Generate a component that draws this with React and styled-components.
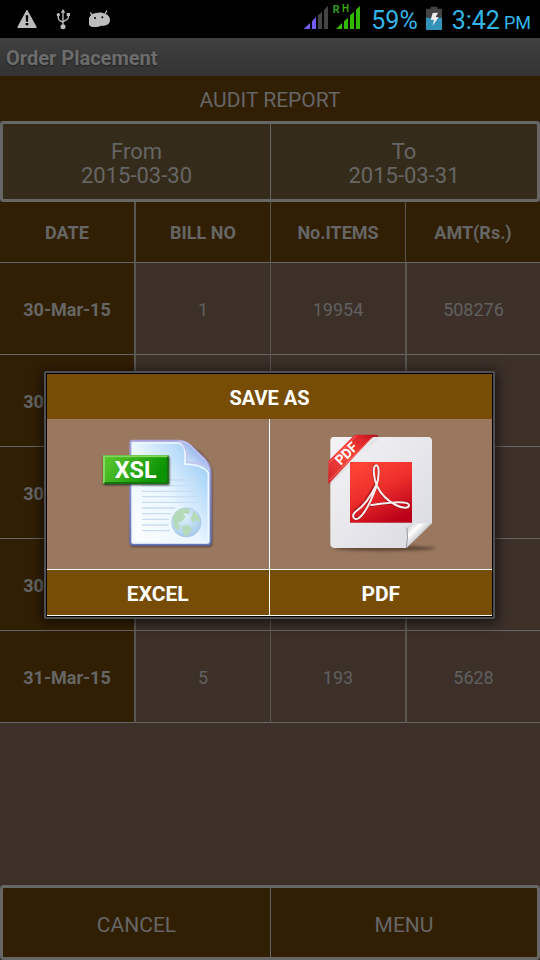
import styled, { createGlobalStyle } from "styled-components";

const GlobalStyle = createGlobalStyle`
  * {
    box-sizing: border-box;
  }

  body {
    margin: 0;
    background: #3c3029;
    color: #666666;
    font-family: Roboto, "Liberation Sans", sans-serif;
  }

  button {
    margin: 0;
    padding: 0;
    border: 0;
    background: none;
    color: inherit;
    font: inherit;
    cursor: pointer;
  }
`;

//Styled Components
const Screen = styled.div`
  min-height: 100vh;
  display: flex;
  flex-direction: column;
`;

const StatusBar = styled.header`
  height: 38px;
  padding: 0 9px 0 17px;
  display: flex;
  justify-content: space-between;
  background: #000000;
  color: #33b5e5;
  font-size: 25px;
  line-height: 42px;

  svg {
    display: block;
  }
`;

const Notifications = styled.div`
  display: flex;
  gap: 19px;
`;

const System = styled.div`
  display: flex;
  gap: 10px;
`;

const Percent = styled.span`
  margin-right: -2px;
`;

const Clock = styled.time`
  small {
    margin-left: 4px;
    font-size: 18px;
  }
`;

const AppBar = styled.h1`
  height: 38px;
  margin: 0;
  padding: 0 6px;
  background: linear-gradient(#404040, #333333);
  color: #6c6c6c;
  font-size: 20px;
  font-weight: 700;
  line-height: 40px;
  text-shadow: 0 1px 2px #222222;
`;

const PageTitle = styled.h2`
  height: 45px;
  margin: 0;
  background: #311f04;
  font-size: 21px;
  font-weight: 400;
  line-height: 49px;
  text-align: center;
`;

const Group = styled.div`
  display: grid;
  grid-template-columns: 1fr 1fr;
  border: 3px solid #666666;
  border-radius: 4px;
  background: ${({ $fill }) => $fill};
`;

const GroupButton = styled.button`
  height: ${({ $height }) => $height};
  padding-top: 4px;
  font-size: ${({ $size }) => $size};
  line-height: 24px;

  & + & {
    border-left: 1px solid #666666;
  }

  span {
    display: block;
  }
`;

const Report = styled.table`
  width: 100%;
  table-layout: fixed;
  border-collapse: separate;
  border-spacing: 0;
  font-size: 18px;
  line-height: 24px;
  text-align: center;
`;

const HeadCell = styled.th`
  height: 61px;
  padding: 2px 0 0;
  background: #311f04;
  border-bottom: 1px solid #666666;
  border-left: 1px solid #5a5753;

  &:first-child {
    border-left: 0;
    border-right: 1px solid #5a5753;
  }
`;

const DateCell = styled.th`
  height: 92px;
  padding: 2px 0 0;
  background: #311f04;
  border-bottom: 1px solid #666666;
  border-right: 1px solid #5a5753;
`;

const Cell = styled.td`
  height: 92px;
  padding: 2px 0 0;
  border-bottom: 1px solid #666666;
  border-left: 1px solid #5a5753;
  color: #606060;

  &:last-child {
    border-left-width: 2px;
  }
`;

const Footer = styled.footer`
  margin-top: auto;
`;

const Overlay = styled.div`
  position: fixed;
  inset: 0;
  padding: 30px 45px 0 44px;
  display: flex;
  align-items: center;
`;

const Dialog = styled.section`
  flex: 1;
  border: 2px solid #505050;
  border-radius: 2px;
  background: #000000;
  padding: 1px;
  box-shadow: 0 2px 12px 2px rgba(0, 0, 0, 0.6);
  color: #ffffff;
  font-size: 21px;
  font-weight: 700;
  line-height: 49px;
  text-align: center;
`;

const DialogTitle = styled.h2`
  height: 45px;
  margin: 0;
  background: #774d06;
  font-size: 20px;
`;

const Options = styled.div`
  display: grid;
  grid-template-columns: 1fr 1fr;
`;

const Option = styled.button`
  background: #99785f;

  &:first-child {
    border-right: 1px solid #ffffff;
  }
`;

const Picture = styled.span`
  height: 150px;
  display: flex;
  align-items: center;
  justify-content: center;
`;

const Label = styled.span`
  height: 47px;
  display: block;
  border-top: 1px solid #ffffff;
  border-bottom: 1px solid #ffffff;
  background: #774d06;
`;

const columns = ["DATE", "BILL NO", "No.ITEMS", "AMT(Rs.)"];

const rows = [
  ["30-Mar-15", "1", "19954", "508276"],
  ["30-Mar-15", "", "", ""],
  ["30-Mar-15", "", "", ""],
  ["30-Mar-15", "", "", ""],
  ["31-Mar-15", "5", "193", "5628"],
];

function WarningIcon() {
  return (
    <svg width="20" height="38" viewBox="51 0 60 114" aria-hidden="true">
      <path
        d="M81 32 L108 82 H54 Z"
        fill="#bdbdbd"
        stroke="#bdbdbd"
        strokeWidth="4"
        strokeLinejoin="round"
      />
      <path d="M77 46 H85 L84 65 H78 Z M77 69 H85 V76 H77 Z" fill="#000" />
    </svg>
  );
}

function UsbIcon() {
  return (
    <svg width="14" height="38" viewBox="169 0 42 114" aria-hidden="true">
      <g fill="none" stroke="#bdbdbd" strokeWidth="4">
        <path d="M190 34 V78" />
        <path d="M176 45 V55 Q176 59 181 62 L190 67" />
        <path d="M206 45 V52 Q206 56 201 59 L190 65" />
      </g>
      <g fill="#bdbdbd">
        <path d="M190 27 L197 38 H183 Z" />
        <circle cx="176" cy="44" r="5" />
        <rect x="201" y="39" width="10" height="9" />
        <circle cx="190" cy="80" r="7.5" />
      </g>
    </svg>
  );
}

function AndroidIcon() {
  return (
    <svg width="22" height="38" viewBox="266 0 66 114" aria-hidden="true">
      <path
        d="M264 66 C263 51 273 41 287 39 C297 36 308 37 315 42 C324 44 329 52 329 60 C329 72 317 79 303 77 C296 79 290 82 281 81 C270 81 264 75 264 66 Z"
        fill="#bdbdbd"
      />
      <path
        d="M271 39 L277 47 M319 33 L314 42"
        stroke="#bdbdbd"
        strokeWidth="4"
        strokeLinecap="round"
      />
      <circle cx="284" cy="54" r="3" fill="#000" />
      <circle cx="306" cy="52" r="3" fill="#000" />
    </svg>
  );
}

function SignalIcon() {
  return (
    <svg width="58" height="38" viewBox="18 0 174 114" aria-hidden="true">
      <path d="M20 87 L39 69 V87 Z M45 64 L57 51 V87 H45 Z" fill="#735cf5" />
      <path d="M63 46 L75 35 V87 H63 Z M81 29 L93 18 V87 H81 Z" fill="#444444" />
      <path
        d="M117 87 L135 69 V87 Z M141 64 L153 53 V87 H141 Z M159 46 L171 35 V87 H159 Z M177 29 L189 18 V87 H177 Z"
        fill="#33b800"
      />
      <text x="107" y="39" fontSize="32" fontWeight="700" fill="#2f9e1a">
        R
      </text>
      <text x="135" y="37" fontSize="30" fontWeight="500" fill="#33b800">
        H
      </text>
    </svg>
  );
}

function BatteryIcon() {
  return (
    <svg width="16" height="38" viewBox="381 0 48 114" aria-hidden="true">
      <path d="M395 20 H415 V26 H429 V53 H381 V26 H395 Z" fill="#444444" />
      <path d="M381 53 H429 V90 H381 Z" fill="#3292b8" />
      <path d="M401 39 L417 38 L410 51 L419 52 L401 77 L405 59 L395 60 Z" fill="#eeeeee" />
    </svg>
  );
}

function ExcelPicture() {
  return (
    <svg width="140" height="140" viewBox="-6 -3 420 420" aria-hidden="true">
      <defs>
        <linearGradient id="sheet" x1="0" y1="1" x2="1" y2="0.1">
          <stop offset="0" stopColor="#ffffff" />
          <stop offset="0.5" stopColor="#e9f6ff" />
          <stop offset="1" stopColor="#8fc6f5" />
        </linearGradient>
        <linearGradient id="sheetEdge" x1="0" y1="0" x2="0" y2="1">
          <stop offset="0" stopColor="#a9a0d6" />
          <stop offset="1" stopColor="#6474b4" />
        </linearGradient>
        <linearGradient id="sheetFold" x1="0" y1="1" x2="1" y2="0">
          <stop offset="0.1" stopColor="#e8f6ff" />
          <stop offset="0.6" stopColor="#9bb9ee" />
        </linearGradient>
        <linearGradient id="tag" x1="0" y1="0" x2="1" y2="0.3">
          <stop offset="0" stopColor="#5cc62e" />
          <stop offset="1" stopColor="#0b9404" />
        </linearGradient>
        <radialGradient id="globe" cx="0.4" cy="0.3" r="0.75">
          <stop offset="0" stopColor="#e2f4fb" />
          <stop offset="1" stopColor="#a3c8ea" />
        </radialGradient>
        <filter id="soft" x="-20%" y="-20%" width="140%" height="140%">
          <feGaussianBlur stdDeviation="3" />
        </filter>
      </defs>
      <path
        d="M124 52 H275 Q350 80 366 140 V356 Q366 364 358 365 H127 Q121 364 121 358 Z"
        fill="#4a3930"
        filter="url(#soft)"
      />
      <path
        d="M127 47 H266 Q286 47 302 62 L345 103 Q361 119 362 141 V350 Q362 359 353 359 H129 Q121 359 121 351 V53 Q121 47 127 47 Z"
        fill="url(#sheet)"
        stroke="url(#sheetEdge)"
        strokeWidth="6"
      />
      <path
        d="M129 54 H262 Q281 56 284 74 Q287 92 284 117 Q337 118 355 143 V348 Q355 352 350 352 H129 Z"
        fill="none"
        stroke="#eff8ff"
        strokeWidth="5"
      />
      <path
        d="M269 49 Q294 66 291 112 Q332 110 357 132 Q351 111 341 101 L300 61 Q287 48 269 49 Z"
        fill="url(#sheetFold)"
        stroke="#c5c2ed"
        strokeWidth="4"
      />
      <path
        d="M156 165 H322 M156 182 H322 M156 199 H322 M156 215 H322 M156 232 H322 M156 249 H256 M156 266 H244 M156 283 H236 M156 300 H236 M156 317 H240"
        stroke="#cadcf1"
        strokeWidth="4"
      />
      <circle cx="289" cy="292" r="44" fill="url(#globe)" stroke="#a5bfe5" strokeWidth="2" />
      <g fill="#b4dab8">
        <path d="M250 272 Q262 250 290 249 L302 257 L294 267 L280 265 L287 276 L276 289 L263 293 L270 307 L263 317 Q246 303 250 272 Z" />
        <path d="M309 259 Q330 272 331 294 L318 286 L309 292 L301 282 L307 271 Z" />
        <path d="M275 304 L294 300 L306 310 L294 332 L282 331 Z" />
      </g>
      <path d="M41 96 H238 V180 H41 Z" fill="#222c1a" filter="url(#soft)" />
      <path d="M39 91 H236 V177 H39 Z" fill="#14750c" />
      <path d="M39 91 H236 L229 98 H46 V170 L39 177 Z" fill="#83d959" />
      <path d="M45 97 H230 V171 H45 Z" fill="url(#tag)" />
      <text
        x="137"
        y="159"
        fontFamily="'Liberation Sans Narrow', Roboto, sans-serif"
        fontSize="70"
        fontWeight="700"
        textAnchor="middle"
        fill="#ffffff"
      >
        XSL
      </text>
    </svg>
  );
}

function PdfPicture() {
  return (
    <svg width="140" height="140" viewBox="-12 -3 420 420" aria-hidden="true">
      <defs>
        <linearGradient id="paper" x1="0" y1="0" x2="1" y2="1">
          <stop offset="0" stopColor="#f4f4f6" />
          <stop offset="1" stopColor="#d9dae1" />
        </linearGradient>
        <linearGradient id="badge" x1="0.2" y1="0" x2="0.7" y2="1">
          <stop offset="0" stopColor="#ff4436" />
          <stop offset="0.45" stopColor="#ee2f2c" />
          <stop offset="1" stopColor="#b90018" />
        </linearGradient>
        <linearGradient id="ribbon" x1="0" y1="1" x2="1" y2="0">
          <stop offset="0" stopColor="#d0202a" />
          <stop offset="0.45" stopColor="#f8473b" />
          <stop offset="0.8" stopColor="#df2429" />
          <stop offset="1" stopColor="#a80e19" />
        </linearGradient>
        <linearGradient id="curl" x1="0" y1="0" x2="1" y2="1">
          <stop offset="0" stopColor="#b9bac0" />
          <stop offset="0.3" stopColor="#ffffff" />
          <stop offset="0.65" stopColor="#a9aab0" />
        </linearGradient>
        <filter id="haze" x="-20%" y="-100%" width="140%" height="300%">
          <feGaussianBlur stdDeviation="4" />
        </filter>
      </defs>
      <ellipse cx="210" cy="370" rx="152" ry="8" fill="#5e4636" filter="url(#haze)" />
      <path
        d="M56 36 H340 Q351 37 351 48 V294 L274 369 H58 Q46 368 46 357 V47 Q46 37 56 36 Z"
        fill="url(#paper)"
      />
      <path d="M274 369 L280 307 Q281 298 290 297 L351 294 Z" fill="url(#curl)" />
      <path d="M274 369 Q280 340 276 308" fill="none" stroke="#999aa1" strokeWidth="3" />
      <path d="M105 111 H291 V293 H105 Z" fill="url(#badge)" />
      <g fill="none" strokeLinejoin="round">
        <path
          d="M180 180 C161 218 143 243 121 257 C108 270 117 289 131 279 C151 265 169 224 183 184 C193 151 192 120 182 121 C170 122 177 162 185 184 C199 211 217 229 241 241 C261 251 280 252 281 241 C282 230 251 232 225 234 C202 235 183 238 165 242"
          stroke="#7d0910"
          strokeOpacity="0.55"
          strokeWidth="9"
        />
        <path
          d="M184 180 C165 218 147 243 124 258 C108 269 114 288 130 280 C151 267 169 226 184 185 C194 151 193 120 183 121 C171 122 177 162 186 184 C200 211 218 228 242 240 C261 250 281 251 282 241 C283 231 252 231 226 233 C203 234 184 237 166 241"
          stroke="#f7eeee"
          strokeWidth="6"
        />
      </g>
      <path d="M39 179 L47 167 L188 39 L191 33 Z" fill="#332722" opacity="0.35" filter="url(#haze)" />
      <path
        d="M40 178 L40 108 L118 31 Q120 29 125 29 H184 Q191 30 190 36 Q177 31 165 45 Z"
        fill="url(#ribbon)"
      />
      <path d="M42 115 L124 33 M44 165 L172 36" stroke="#ff928b" strokeWidth="2" fill="none" />
      <text
        x="94"
        y="100"
        fontFamily="Roboto, sans-serif"
        fontSize="41"
        fontWeight="700"
        textAnchor="middle"
        fill="#ffffff"
        transform="rotate(-45 94 86)"
      >
        PDF
      </text>
    </svg>
  );
}

export default function App() {
  return (
    <>
      <GlobalStyle />
      <Screen>
        <StatusBar>
          <Notifications>
            <WarningIcon />
            <UsbIcon />
            <AndroidIcon />
          </Notifications>
          <System>
            <SignalIcon />
            <Percent>59%</Percent>
            <BatteryIcon />
            <Clock>
              3:42<small>PM</small>
            </Clock>
          </System>
        </StatusBar>
        <AppBar>Order Placement</AppBar>
        <PageTitle>AUDIT REPORT</PageTitle>
        <Group $fill="#352b1a">
          <GroupButton $height="75px" $size="22px">
            <span>From</span>
            <span>2015-03-30</span>
          </GroupButton>
          <GroupButton $height="75px" $size="22px">
            <span>To</span>
            <span>2015-03-31</span>
          </GroupButton>
        </Group>
        <Report>
          <thead>
            <tr>
              {columns.map((column) => (
                <HeadCell key={column} scope="col">
                  {column}
                </HeadCell>
              ))}
            </tr>
          </thead>
          <tbody>
            {rows.map(([date, bill, items, amount], index) => (
              <tr key={index}>
                <DateCell scope="row">{date}</DateCell>
                <Cell>{bill}</Cell>
                <Cell>{items}</Cell>
                <Cell>{amount}</Cell>
              </tr>
            ))}
          </tbody>
        </Report>
        <Footer>
          <Group $fill="#311f04">
            <GroupButton $height="69px" $size="21px">
              CANCEL
            </GroupButton>
            <GroupButton $height="69px" $size="21px">
              MENU
            </GroupButton>
          </Group>
        </Footer>
      </Screen>
      <Overlay>
        <Dialog role="dialog" aria-labelledby="save-as">
          <DialogTitle id="save-as">SAVE AS</DialogTitle>
          <Options>
            <Option>
              <Picture>
                <ExcelPicture />
              </Picture>
              <Label>EXCEL</Label>
            </Option>
            <Option>
              <Picture>
                <PdfPicture />
              </Picture>
              <Label>PDF</Label>
            </Option>
          </Options>
        </Dialog>
      </Overlay>
    </>
  );
}
